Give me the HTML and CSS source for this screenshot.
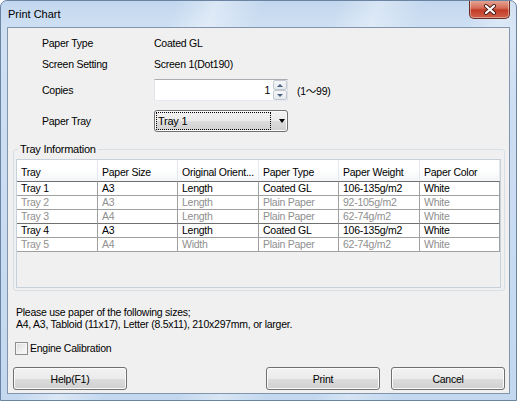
FILE: index.html
```html
<!DOCTYPE html>
<html lang="en">
<head>
    <title>Print Chart</title>
    <meta charset="UTF-8">
    <link rel="stylesheet" href="styles.css">
</head>
<body>
    <div class="window">
        <div class="titlebar">
            <span class="title">Print Chart</span>
            <button class="close" aria-label="Close">
                <svg width="14" height="11" viewBox="0 0 14 11">
                    <path d="M3 2 L11 9 M11 2 L3 9" stroke="#4a1f18" stroke-width="4" stroke-linecap="round"/>
                    <path d="M3 2 L11 9 M11 2 L3 9" stroke="#ffffff" stroke-width="2.2" stroke-linecap="round"/>
                </svg>
            </button>
        </div>

        <div class="client">
            <div class="info">
                <div class="row">
                    <span class="label">Paper Type</span>
                    <span>Coated GL</span>
                </div>
                <div class="row">
                    <span class="label">Screen Setting</span>
                    <span>Screen 1(Dot190)</span>
                </div>
                <div class="row row-copies">
                    <span class="label">Copies</span>
                    <div class="spin">
                        <span class="spin-value">1</span>
                        <div class="spin-btns">
                            <span class="spin-btn"><i class="tri-up"></i></span>
                            <span class="spin-btn"><i class="tri-down"></i></span>
                        </div>
                    </div>
                    <span class="range">(1～99)</span>
                </div>
                <div class="row row-tray">
                    <span class="label">Paper Tray</span>
                    <div class="combo">
                        <span class="combo-text">Tray 1</span>
                        <span class="combo-arrow"></span>
                    </div>
                </div>
            </div>

            <fieldset class="group">
                <legend>Tray Information</legend>
                <div class="listview">
                    <table>
                        <colgroup>
                            <col style="width: 81px">
                            <col style="width: 80px">
                            <col style="width: 81px">
                            <col style="width: 80px">
                            <col style="width: 81px">
                            <col style="width: 80px">
                        </colgroup>
                        <thead>
                            <tr>
                                <th>Tray</th>
                                <th>Paper Size</th>
                                <th>Original Orient...</th>
                                <th>Paper Type</th>
                                <th>Paper Weight</th>
                                <th>Paper Color</th>
                            </tr>
                        </thead>
                        <tbody>
                            <tr class="active">
                                <td>Tray 1</td><td>A3</td><td>Length</td><td>Coated GL</td><td>106-135g/m2</td><td>White</td>
                            </tr>
                            <tr>
                                <td>Tray 2</td><td>A3</td><td>Length</td><td>Plain Paper</td><td>92-105g/m2</td><td>White</td>
                            </tr>
                            <tr>
                                <td>Tray 3</td><td>A4</td><td>Length</td><td>Plain Paper</td><td>62-74g/m2</td><td>White</td>
                            </tr>
                            <tr class="active">
                                <td>Tray 4</td><td>A3</td><td>Length</td><td>Coated GL</td><td>106-135g/m2</td><td>White</td>
                            </tr>
                            <tr>
                                <td>Tray 5</td><td>A4</td><td>Width</td><td>Plain Paper</td><td>62-74g/m2</td><td>White</td>
                            </tr>
                        </tbody>
                    </table>
                </div>
            </fieldset>

            <p class="note">Please use paper of the following sizes;<br>A4, A3, Tabloid (11x17), Letter (8.5x11), 210x297mm, or larger.</p>

            <label class="check"><span class="box"></span>Engine Calibration</label>

            <div class="buttons">
                <button class="btn">Help(F1)</button>
                <div class="btn-group">
                    <button class="btn">Print</button>
                    <button class="btn">Cancel</button>
                </div>
            </div>
        </div>
    </div>
</body>
</html>
```

FILE: styles.css
```css
body {
    margin: 0;
    font-family: "Liberation Sans", Arial, "Noto Sans CJK JP", sans-serif;
    font-size: 10.5px;
    letter-spacing: -0.25px;
    color: #000;
    background: #fff;
}

.window {
    width: 517px;
    height: 401px;
    box-sizing: border-box;
    border: 1px solid #6a84a2;
    border-radius: 7px 7px 0 0;
    padding: 0 6px 6px;
    display: flex;
    flex-direction: column;
    overflow: hidden;
    background:
        linear-gradient(112deg, transparent 0 26%, rgba(255,255,255,.4) 32%, transparent 39%, transparent 50%, rgba(255,255,255,.35) 56%, transparent 63%, transparent 70%, rgba(255,255,255,.3) 75%, transparent 82%),
        linear-gradient(to bottom, #c2d7ee, #cfe0f3 28px, #c3d8ef);
}

.titlebar {
    height: 26px;
    display: flex;
    justify-content: space-between;
    align-items: flex-start;
}

.title {
    padding-left: 1px;
    line-height: 26px;
    font-size: 11px;
    letter-spacing: 0;
}

.close {
    width: 41px;
    height: 19px;
    margin-top: -1px;
    padding: 0;
    border: 1px solid #6b2c22;
    border-top: none;
    border-radius: 0 0 5px 5px;
    background: linear-gradient(#e7a99b, #d56c57 45%, #c23c28 55%, #cf6048);
    box-shadow: inset 0 0 0 1px rgba(255,255,255,.4);
    display: flex;
    align-items: center;
    justify-content: center;
}

.client {
    flex: 1;
    background: #f0f0f0;
    border: 1px solid #8395ad;
    display: flex;
    flex-direction: column;
}

.info {
    padding: 4px 0 0 34px;
}

.row {
    height: 21px;
    display: flex;
    align-items: center;
}

.label {
    width: 112px;
}

.row-copies {
    height: 22px;
    margin-top: 5px;
}

.row-tray {
    height: 22px;
    margin-top: 9px;
}

.spin {
    width: 134px;
    height: 22px;
    box-sizing: border-box;
    border: 1px solid #abadb3;
    border-color: #abadb3 #dbdfe6 #e3e9ef #e2e3ea;
    background: #fff;
    display: flex;
    align-items: center;
}

.spin-value {
    flex: 1;
    text-align: right;
    padding-right: 3px;
}

.spin-btns {
    width: 14px;
    height: 20px;
    display: flex;
    flex-direction: column;
}

.spin-btn {
    flex: 1;
    box-sizing: border-box;
    border: 1px solid #c2c8d0;
    border-radius: 2px;
    background: linear-gradient(#f6f7f8, #e6e9ed);
    display: flex;
    align-items: center;
    justify-content: center;
}

.tri-up, .tri-down {
    width: 0;
    height: 0;
    border-left: 3px solid transparent;
    border-right: 3px solid transparent;
}

.tri-up {
    border-bottom: 3px solid #4d6185;
}

.tri-down {
    border-top: 3px solid #4d6185;
}

.range {
    margin-left: 9px;
}

.combo {
    width: 134px;
    height: 22px;
    box-sizing: border-box;
    border: 1px solid #707070;
    border-radius: 3px;
    background: linear-gradient(#f2f2f2, #ebebeb 50%, #dddddd 50%, #cfcfcf);
    box-shadow: inset 0 0 0 1px #fbfbfb;
    display: flex;
    align-items: center;
    padding: 1px;
}

.combo-text {
    width: 115px;
    height: 18px;
    box-sizing: border-box;
    border: 1px dotted #000;
    line-height: 16px;
    font-size: 11px;
    padding-left: 1px;
}

.combo-arrow {
    margin-left: 8px;
    width: 0;
    height: 0;
    border-left: 3.5px solid transparent;
    border-right: 3.5px solid transparent;
    border-top: 4px solid #000;
}

.group {
    margin: 10px 4px 0 5px;
    padding: 3px 3px 2px 2px;
    border: 1px solid #d5dfe5;
    border-radius: 3px;
    min-inline-size: 0;
}

.group legend {
    margin-left: 2px;
    padding: 0 2px;
    line-height: 14px;
    font-size: 11px;
}

.listview {
    height: 127px;
    border: 1px solid #c8d0da;
    background: #f0f0f0;
}

.listview table {
    border-collapse: separate;
    border-spacing: 0;
    table-layout: fixed;
    width: 483px;
}

.listview th {
    height: 21px;
    box-sizing: border-box;
    padding: 2px 0 0 4px;
    text-align: left;
    font-weight: normal;
    white-space: nowrap;
    overflow: hidden;
    border-right: 1px solid #e3e8ee;
    background: linear-gradient(#ffffff, #ffffff 45%, #f3f5f8);
}

.listview td {
    height: 13px;
    padding: 0 0 0 4px;
    line-height: 13px;
    white-space: nowrap;
    overflow: hidden;
    color: #8f8f8f;
    background: #fff;
    border-right: 1px solid #a0a0a0;
    border-bottom: 1px solid #a0a0a0;
}

.listview tbody tr:first-child td {
    border-top: 1px solid #707070;
}

.listview tr.active td {
    color: #000;
}

.listview tr:has(+ tr.active) td {
    border-bottom-color: #707070;
}

.note {
    margin: 15px 0 0 8px;
    line-height: 12px;
}

.check {
    margin: 11px 0 0 7px;
    height: 14px;
    display: flex;
    align-items: center;
}

.box {
    width: 13px;
    height: 13px;
    box-sizing: border-box;
    border: 1px solid #8f8f8f;
    background: linear-gradient(135deg, #dcdcdc, #f4f4f4 70%, #fafafa);
    box-shadow: inset 0 0 0 1px #f4f4f4;
    margin-right: 2px;
}

.buttons {
    margin: 12px 4px 0 5px;
    display: flex;
    justify-content: space-between;
}

.btn-group {
    display: flex;
    gap: 11px;
}

.btn {
    width: 114px;
    height: 23px;
    padding: 0;
    border: 1px solid #707070;
    border-radius: 3px;
    background: linear-gradient(#f2f2f2, #ebebeb 50%, #dddddd 50%, #cfcfcf);
    box-shadow: inset 0 0 0 1px #fbfbfb;
    font: inherit;
    letter-spacing: inherit;
    color: #000;
}
```
